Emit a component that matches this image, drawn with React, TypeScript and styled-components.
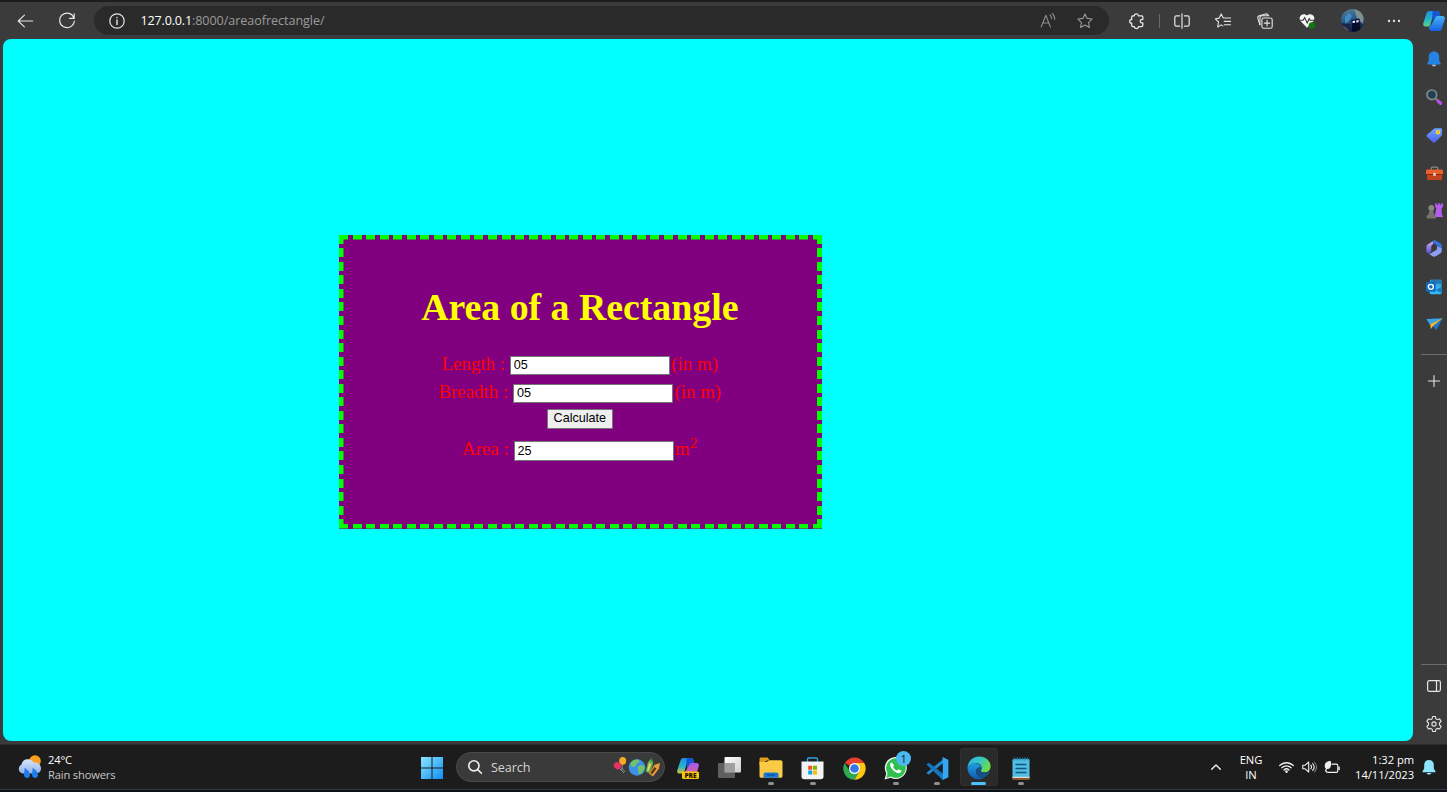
import React from "react";
import styled, { createGlobalStyle, css } from "styled-components";

const GlobalStyle = createGlobalStyle`
  * { box-sizing: border-box; }
  html, body { margin: 0; padding: 0; overflow: hidden; background: #0b0f17; }
`;

const ui = css`
  font-family: "Open Sans", "Noto Sans", sans-serif;
`;

const Screen = styled.div`
  width: 1447px;
  height: 792px;
  display: flex;
  flex-direction: column;
  overflow: hidden;
  background: #0b0f17;
`;

const Browser = styled.div`
  height: 744px;
  display: flex;
  flex-direction: column;
  background: #3b3b3b;
  border-top: 2px solid #1d1d1d;
`;

const Toolbar = styled.header`
  height: 37px;
  flex: none;
  display: flex;
  align-items: center;
  padding-left: 4px;
`;

const Slot = styled.div<{ $w: number }>`
  width: ${(p) => p.$w}px;
  height: 100%;
  flex: none;
  display: flex;
  align-items: center;
  justify-content: center;
`;

const AddressBar = styled.div`
  width: 1015px;
  height: 29px;
  margin: 0 12px 0 6px;
  display: flex;
  align-items: center;
  flex: none;
  border-radius: 15px;
  background: #2a2a2a;
`;

const Url = styled.span`
  ${ui}
  flex: 1;
  font-size: 12.6px;
  line-height: 18px;
  letter-spacing: -0.06px;
  color: #9b9b9b;
  white-space: pre;
`;

const Host = styled.span`
  color: #fff;
  letter-spacing: -0.2px;
`;

const BarDivider = styled.i`
  width: 1px;
  height: 14px;
  background: #6a6a6a;
`;

const Content = styled.div`
  flex: 1;
  display: flex;
  min-height: 0;
`;

const Page = styled.main`
  width: 1410px;
  height: 702px;
  margin-left: 3px;
  flex: none;
  border-radius: 8px;
  background: #00ffff;
  padding: 196.3px 0 0 336px;
  font-family: "Liberation Serif", "Times New Roman", serif;
`;

const Card = styled.form`
  width: 483px;
  height: 293.4px;
  padding: 49.4px 1.4px 0 0;
  display: flex;
  flex-direction: column;
  align-items: center;
  color: #ff0000;
  font-size: 18.9px;
  background-color: #800080;
  background-image:
    repeating-linear-gradient(90deg, #0f0 0 9px, transparent 9px 13.543px),
    repeating-linear-gradient(90deg, #0f0 0 9px, transparent 9px 13.543px),
    repeating-linear-gradient(180deg, #0f0 0 9px, transparent 9px 13.548px),
    repeating-linear-gradient(180deg, #0f0 0 9px, transparent 9px 13.548px);
  background-size: 100% 4.5px, 100% 4.5px, 4.5px 100%, 5px 100%;
  background-position: top, bottom, left, right;
  background-repeat: no-repeat;
`;

const Title = styled.h1`
  margin: 0;
  height: 44px;
  line-height: 44px;
  font-size: 37.8px;
  font-weight: bold;
  color: #ffff00;
  white-space: nowrap;
`;

const Row = styled.div<{ $gap: number }>`
  height: 20px;
  margin-top: ${(p) => p.$gap}px;
  display: flex;
  align-items: flex-start;
  white-space: pre;
  line-height: 20px;
`;

const Label = styled.label`
  margin-top: -2px;
  white-space: pre;
`;

const Field = styled.input`
  width: 160.5px;
  height: 19.5px;
  margin: 0 1px 0 0;
  padding: 0 3px;
  border: 1px solid #767676;
  border-radius: 0;
  outline: none;
  background: #fff;
  color: #000;
  font: 12.6px "Liberation Sans", Arial, sans-serif;
`;

const Sup = styled.sup`
  font-size: 15.6px;
  line-height: 0;
  vertical-align: super;
`;

const Submit = styled.button`
  width: 66px;
  height: 20.5px;
  margin: 5px 0 0;
  padding: 0 0 1px;
  border: 1px solid #767676;
  border-radius: 1px;
  background: #efefef;
  color: #000;
  font: 12.6px "Liberation Sans", Arial, sans-serif;
`;

const Sidebar = styled.aside`
  width: 34px;
  padding: 1.5px 0 2px 8px;
  display: flex;
  flex-direction: column;
`;

const SideItem = styled.div<{ $h?: number }>`
  height: ${(p) => p.$h ?? 37.9}px;
  flex: none;
  display: flex;
  align-items: center;
  justify-content: center;
`;

const SideRule = styled.hr<{ $top?: string }>`
  width: 100%;
  height: 1px;
  flex: none;
  margin: ${(p) => p.$top ?? "0"} 0 0;
  border: 0;
  background: #6c6c6c;
`;

const Taskbar = styled.footer`
  height: 46px;
  flex: none;
  display: flex;
  align-items: center;
  background: #1c1c1c;
  border-top: 1px solid #2c2c2c;
  border-bottom: 1px solid #343a42;
  color: #fff;
`;

const Weather = styled.div`
  ${ui}
  width: 411px;
  padding-left: 18px;
  display: flex;
  align-items: center;
  gap: 6px;
  font-size: 11.2px;
  line-height: 15px;
  letter-spacing: -0.18px;
  flex: none;
`;

const Muted = styled.div`
  color: #c6c6c6;
  white-space: nowrap;
`;

const StartButton = styled.div`
  width: 42px;
  flex: none;
  display: flex;
  justify-content: center;
  padding-top: 1px;
`;

const SearchBox = styled.div`
  ${ui}
  width: 209px;
  height: 30px;
  flex: none;
  margin: 0 2px 0 3px;
  padding: 0 4px 0 11px;
  display: flex;
  align-items: center;
  border-radius: 15px;
  border: 1px solid #4b4b4b;
  background: #3a3a3a;
  color: #d4d4d4;
  font-size: 12.6px;
  letter-spacing: -0.1px;
`;

const SearchText = styled.span`
  flex: 1;
  padding: 1px 0 0 9px;
`;

const TaskButton = styled.div<{ $active?: boolean }>`
  width: 37.6px;
  height: 38px;
  margin: 0 2px;
  flex: none;
  display: flex;
  flex-direction: column;
  align-items: center;
  padding-top: 8px;
  border-radius: 4px;
  background: ${(p) => (p.$active ? "#2a2a2a" : "transparent")};
  box-shadow: ${(p) => (p.$active ? "inset 0 0 0 1px #303030" : "none")};
`;

const Indicator = styled.i<{ $active?: boolean }>`
  width: ${(p) => (p.$active ? 15 : 6)}px;
  height: 3px;
  margin-top: 2px;
  border-radius: 2px;
  background: ${(p) => (p.$active ? "#4cc2ff" : "#8f8f8f")};
`;

const IconBox = styled.div`
  position: relative;
  height: 24px;
  display: flex;
  align-items: center;
`;

const Badge = styled.span`
  ${ui}
  position: absolute;
  right: -4px;
  top: -5px;
  width: 15px;
  height: 15px;
  border-radius: 50%;
  background: #4cb8f0;
  color: #10202c;
  font-size: 11px;
  line-height: 15px;
  text-align: center;
`;

const Tray = styled.div`
  ${ui}
  flex: 1;
  height: 100%;
  display: flex;
  align-items: center;
  justify-content: flex-end;
  padding-right: 4px;
  font-size: 11.2px;
  line-height: 15px;
`;

const Language = styled.div`
  width: 40px;
  margin-left: 10px;
  text-align: center;
  letter-spacing: -0.1px;
`;

const Clock = styled.div`
  width: 67px;
  text-align: right;
  white-space: nowrap;
  letter-spacing: -0.05px;
`;

const Glyph = styled.svg`
  display: block;
  flex: none;
  overflow: visible;
`;

const LineGlyph = styled(Glyph)<{ $c?: string; $sw?: number }>`
  fill: none;
  stroke: ${(p) => p.$c ?? "#e6e6e6"};
  stroke-width: ${(p) => p.$sw ?? 1.1};
  stroke-linecap: round;
  stroke-linejoin: round;
`;

/* ---------- toolbar icons ---------- */

const BackIcon = () => (
  <LineGlyph width="16" height="16" viewBox="0 0 16 16">
    <path d="M15.7 8H1.2M7.400 2.200L1.200 8l6.200 5.800" />
  </LineGlyph>
);

const ReloadIcon = () => (
  <LineGlyph width="16" height="16" viewBox="0 0 16 16" $sw={1.2}>
    <path d="M15 5.2A7.3 7.3 0 1 0 15.3 8M15.2 .8v4.6h-4.6" />
  </LineGlyph>
);

const InfoIcon = () => (
  <LineGlyph width="16" height="16" viewBox="0 0 16 16" $sw={1.2}>
    <circle cx="8" cy="8" r="7.2" />
    <path d="M8 7v4.500M8 4.400v.3" strokeWidth="1.400" />
  </LineGlyph>
);

const ReadAloudIcon = () => (
  <LineGlyph width="16" height="16" viewBox="0 0 16 16" $c="#8d8d8d">
    <path d="M1.2 14L5.8 2.3 10.4 14M2.8 10h6M10 1.800c1.200 1 1.600 2.300 1.500 3.800M12.300.6c1.800 1.500 2.600 3.400 2.400 5.800" />
  </LineGlyph>
);

const STAR = "M8 .9l2.15 4.5 4.95.68-3.6 3.45.88 4.92L8 12.1l-4.38 2.35.88-4.92L.9 6.08l4.95-.68z";

const StarIcon = () => (
  <LineGlyph width="16" height="16" viewBox="0 0 16 16" $c="#989898">
    <path d={STAR} />
  </LineGlyph>
);

const PuzzleIcon = () => (
  <LineGlyph width="16" height="16" viewBox="0 0 16 16" $sw={1.3}>
    <path d="M5.200 2.900c-.2-2.700 4.500-2.700 4.100 0h3.400c.6 0 1.100.5 1.100 1.100v2.500c-3.300-.6-3.500 3.700 0 3.500v2.600c0 .6-.5 1.100-1.100 1.100H9.400c.6 2.400-4.400 2.500-4 0H3.800c-.6 0-1.100-.5-1.100-1.100v-2.400c-2.700.4-2.700-4 0-3.700V4c0-.6.500-1.100 1.100-1.100z" />
  </LineGlyph>
);

const SplitIcon = () => (
  <LineGlyph width="16" height="16" viewBox="0 0 16 16" $sw={1.2}>
    <path d="M8 .8v14.4M5.600 2.800H2.500C1.400 2.800.8 3.400.8 4.500v7c0 1.100.6 1.700 1.700 1.700h3.100M10.400 2.800h3.100c1.100 0 1.700.6 1.700 1.700v7c0 1.100-.6 1.700-1.700 1.700h-3.100" />
  </LineGlyph>
);

const FavoritesIcon = () => (
  <LineGlyph width="16" height="16" viewBox="0 0 16 16">
    <path d="M15.600 5H8.300L6.200.9 4.200 5.100.4 5.800l3.100 3.200-.8 5 3.500-2.100 1.600 1M9.300 8.400h6.300M9.300 11.700h6.300" />
  </LineGlyph>
);

const CollectionsIcon = () => (
  <LineGlyph width="16" height="16" viewBox="0 0 16 16">
    <rect x="4.900" y="5" width="10.300" height="10.200" rx="1.800" />
    <path d="M10.050 7.400v5.500M7.300 10.100h5.500" />
    <path d="M2.900 11.800L.9 5.300C.5 4 1 3.200 2.200 2.800L8.600 1c1.300-.3 2.200.1 2.600 1.500" />
    <path d="M2.900 11.800V4.900c0-1.300.7-2.100 2-2.100h6.900" />
  </LineGlyph>
);

const HealthIcon = () => (
  <Glyph width="17" height="16" viewBox="0 0 17 16">
    <path d="M8 14.800L1.400 8C-1.500 3.200 4.400-1.200 8 2.600c3.600-3.800 9.500.6 6.600 5.400z" fill="#f4f4f4" />
    <path d="M.8 7.300h3.300L5.700 4.600l2.500 5.400 2-4.300 1 1.600h3.900" fill="none" stroke="#333" strokeWidth="1.100" />
    <circle cx="12.900" cy="12.400" r="3.200" fill="#0e7a0d" />
    <path d="M11.600 12.500l1 1 1.700-2" fill="none" stroke="#063" strokeWidth=".8" />
  </Glyph>
);

const AvatarIcon = () => (
  <Glyph width="23" height="23" viewBox="0 0 23 23">
    <defs>
      <linearGradient id="av" x1="0" y1="0" x2="0.300" y2="1">
        <stop offset="0" stopColor="#5d7f90" />
        <stop offset=".5" stopColor="#2a5f8c" />
        <stop offset="1" stopColor="#0f1d45" />
      </linearGradient>
      <clipPath id="avc"><circle cx="11.500" cy="11.500" r="11.500" /></clipPath>
    </defs>
    <g clipPath="url(#avc)">
      <rect width="23" height="23" fill="url(#av)" />
      <path d="M13 0l6 2 4 6-1 7-6-6z" fill="#7f8f93" />
      <path d="M4 8l4-4 3 3-3 5-4 3z" fill="#3f8bc4" />
      <path d="M0 14l9 1 2 8H0z" fill="#16284a" />
      <path d="M10.500 11l8-1.500.7 13h-8z" fill="#070b28" />
      <path d="M11.500 12l2.500-.4v2.200l-2.500.3zM15.200 11.500l2.400-.4v2.200l-2.400.3z" fill="#dbe8ff" />
      <path d="M1 16l5 3 3 4-6-1z" fill="#5b4a52" />
    </g>
  </Glyph>
);

const DotsIcon = () => (
  <Glyph width="14" height="4" viewBox="0 0 14 4" fill="#e8e8e8">
    <circle cx="2" cy="2" r="1.150" />
    <circle cx="7" cy="2" r="1.150" />
    <circle cx="12" cy="2" r="1.150" />
  </Glyph>
);

const CopilotIcon = ({ pre }: { pre?: boolean }) => {
  const id = pre ? "p" : "c";
  return (
    <Glyph width="22" height="22" viewBox="0 0 22 22">
      <defs>
        <linearGradient id={id + "1"} x1="0" y1="0" x2="0" y2="1">
          <stop offset="0" stopColor="#1f8fe8" />
          <stop offset=".55" stopColor="#27b4c9" />
          <stop offset="1" stopColor={pre ? "#d9c531" : "#5bd18b"} />
        </linearGradient>
        <linearGradient id={id + "2"} x1="0" y1="0" x2="0" y2="1">
          <stop offset="0" stopColor={pre ? "#a35af0" : "#48b4f5"} />
          <stop offset="1" stopColor={pre ? "#f2628a" : "#1463e8"} />
        </linearGradient>
      </defs>
      <path d="M6.500 1h7.500c1.300 0 2 .7 2.300 1.900L17.200 6h-2.700c-1.300 0-2 .8-2.400 2L10 5.500 7.300 14.800c-.4 1.200-1 1.700-2.200 1.700H2.700C.6 16.500-.2 15 .3 13.200L3.500 3.500C4.100 1.700 5 1 6.500 1z" fill={`url(#${id}1)`} />
      <path d="M9.500 1h4.500c1.300 0 2 .7 2.300 1.900L17.200 6h-2.700c-1.300 0-2 .8-2.400 2L10.600 13 9.300 8z" fill="#1556d3" />
      <path d="M14.600 6h4.900c1.900 0 2.800 1.400 2.300 3.100l-3 9.300c-.6 1.800-1.300 2.600-2.900 2.600H8.500c-1.300 0-2-.8-2.200-1.900l-.6-2.600c1.800-.1 2.500-.9 3-2.500L12.200 8c.4-1.300 1.100-2 2.400-2z" fill={`url(#${id}2)`} />
      {pre && (
        <>
          <rect x="5" y="14.500" width="17" height="7.500" rx="1.500" fill="#fdc60a" />
          <text x="13.500" y="20.700" textAnchor="middle" fontFamily="Open Sans, sans-serif" fontWeight="800" fontSize="6.600" fill="#1b1500">PRE</text>
        </>
      )}
    </Glyph>
  );
};

/* ---------- sidebar icons ---------- */

const BellIcon = () => (
  <Glyph width="16" height="16" viewBox="0 0 16 16">
    <path d="M5.600 13.500h4.800c-.6 2.600-4.200 2.600-4.800 0z" fill="#b9bcc2" />
    <path d="M8 .5c3.400 0 5.200 2.400 5.200 5.300v3.600l1.500 3c.3.7 0 1.100-.6 1.100H1.900c-.6 0-.9-.4-.6-1.100l1.500-3V5.800C2.800 2.900 4.600.5 8 .5z" fill="#2583e4" />
  </Glyph>
);

const LensIcon = () => (
  <Glyph width="17" height="17" viewBox="0 0 17 17">
    <path d="M9.500 9.500l3 3" stroke="#9a9a9a" strokeWidth="1.500" />
    <path d="M12.200 12.200l2.300 2.100" stroke="#c04af0" strokeWidth="3.200" strokeLinecap="round" />
    <circle cx="5.800" cy="5.800" r="4.800" fill="#23414d" stroke="#7b8a92" strokeWidth="1.700" />
  </Glyph>
);

const TagIcon = () => (
  <Glyph width="17" height="17" viewBox="0 0 17 17">
    <defs>
      <linearGradient id="tag" x1="0" y1="0" x2="0" y2="1">
        <stop offset="0" stopColor="#6fa8ff" />
        <stop offset="1" stopColor="#4a60e8" />
      </linearGradient>
    </defs>
    <path d="M9.500 1.200h5c1 0 1.600.6 1.600 1.600v4.700c0 .7-.2 1.100-.7 1.600l-6.300 6.100c-.8.7-1.600.7-2.300 0L1.200 9.900c-.8-.8-.7-1.600 0-2.300l6.500-5.700c.5-.5 1-.7 1.800-.7z" fill="url(#tag)" />
    <circle cx="12" cy="5.300" r="2.200" fill="#ffd92e" />
    <circle cx="12" cy="5.300" r=".7" fill="#a48a1a" />
  </Glyph>
);

const ToolboxIcon = () => (
  <Glyph width="17" height="15" viewBox="0 0 17 15">
    <path d="M5.300 4V2.300c0-.7.400-1.100 1.100-1.100h4.200c.7 0 1.100.4 1.100 1.100V4" fill="none" stroke="#8b8b8b" strokeWidth="1.300" />
    <rect x="1" y="7" width="15" height="7" rx="1" fill="#c4421c" />
    <rect x="0" y="3.600" width="17" height="5" rx="1.200" fill="#e8602c" />
    <rect x="0" y="8" width="17" height="1" fill="#8c2a10" />
    <rect x="7.200" y="6.700" width="2.600" height="3.200" rx="1" fill="#e6d5c8" />
  </Glyph>
);

const ChessIcon = () => (
  <Glyph width="17" height="16" viewBox="0 0 17 16">
    <path d="M9.200.3h1.700v1.500h1.300V.3h1.700v1.500h1.300V.3H17v3.500l-1.500 1.400.5 7.200h1v1.600H9.300l-.5-1.500 1.600-7.300-1.200-1.400z" fill="#b65cf0" />
    <circle cx="5.300" cy="5" r="2.900" fill="#8a8783" />
    <path d="M3.300 7.400h4c0 2.500.5 3.800 1.700 5.100h1v3H.6v-3h1c1.200-1.300 1.700-2.600 1.700-5.100z" fill="#77736f" />
  </Glyph>
);

const M365Icon = () => (
  <Glyph width="16" height="17" viewBox="0 0 16 17">
    <defs>
      <linearGradient id="m3" x1="0" y1="0" x2="0" y2="1">
        <stop offset="0" stopColor="#d7b3f5" />
        <stop offset="1" stopColor="#5a4fd0" />
      </linearGradient>
    </defs>
    <path d="M8.500.3L2.600 3.700C1 4.700.4 5.700.4 7.300v4.200c0 1.500 1.200 2.200 2.500 1.500l2.300-1.300V7.500c0-1.600.6-2.600 2-3.400z" fill="url(#m3)" />
    <path d="M7 .8C8.200.1 9.300.2 10.500.9L14 3c1.300.8 1.800 1.600 1.800 3.100v4.500L11 8V6.800c0-1.300-.4-2-1.500-2.600L6 2z" fill="#3d6fd8" />
    <path d="M15.700 8.200v2.300c0 1.500-.6 2.500-1.900 3.300l-3.600 2.200c-1.500.9-2.600.9-4 0l-3.500-2.300c1 0 1.800-.4 2.600-.8L11 9.400V6.500z" fill="#8d9df0" />
  </Glyph>
);

const OutlookIcon = () => (
  <Glyph width="16" height="16" viewBox="0 0 16 16">
    <rect x="4" y=".8" width="11.500" height="9" rx="1" fill="#35a9e8" />
    <path d="M5 .8h10.500v4H5z" fill="#2577b4" />
    <path d="M3.500 8.500l12.300-.8v6.100c0 .8-.6 1.400-1.400 1.400H4.900c-.8 0-1.400-.6-1.400-1.400z" fill="#35b8f1" />
    <path d="M15.800 7.700v6.500L9.500 11z" fill="#147bc4" />
    <rect x="0" y="3" width="9.700" height="9.700" rx="1" fill="#0f6cbd" />
    <circle cx="4.850" cy="7.850" r="2.500" fill="none" stroke="#fff" strokeWidth="1.400" />
  </Glyph>
);

const DropIcon = () => (
  <Glyph width="17" height="13" viewBox="0 0 17 13">
    <path d="M.3 1L16.700.3 4.200 7.200z" fill="#39a5e6" />
    <path d="M16.700.3L10.500 12 6.800 8.300z" fill="#1878d0" />
    <path d="M16.700.3L4.200 6.200l.7 4.900 2-2.800z" fill="#f6b830" />
  </Glyph>
);

const PlusIcon = () => (
  <LineGlyph width="12" height="12" viewBox="0 0 12 12"><path d="M6 .5v11M.5 6h11" /></LineGlyph>
);

const PanelIcon = () => (
  <LineGlyph width="14" height="12" viewBox="0 0 14 12" $sw={1.200}>
    <rect x=".6" y=".6" width="12.800" height="10.800" rx="1.800" />
    <path d="M9.500.8v10.400" />
  </LineGlyph>
);

const GearIcon = () => (
  <LineGlyph width="16" height="16" viewBox="0 0 16 16">
    <path d="M6.600.5h2.800l.5 2.200 1.500.9 2.200-.7 1.500 2.500L13.500 7v1.900l1.600 1.600-1.500 2.500-2.200-.6-1.500.9-.5 2.200H6.600l-.5-2.200-1.500-.9-2.200.6-1.500-2.500 1.600-1.600V7L.9 5.400l1.500-2.500 2.200.7 1.500-.9z" />
    <circle cx="8" cy="8" r="2.100" />
  </LineGlyph>
);

/* ---------- taskbar icons ---------- */

const WeatherIcon = () => (
  <Glyph width="24" height="24" viewBox="0 0 24 24">
    <defs>
      <linearGradient id="cl" x1="0" y1="0" x2="0" y2="1">
        <stop offset="0" stopColor="#d9e6fb" />
        <stop offset="1" stopColor="#8fb1e8" />
      </linearGradient>
    </defs>
    <circle cx="17" cy="6" r="5.800" fill="#f8a01f" />
    <path d="M4.500 18.500A4.800 4.800 0 0 1 3.500 9.500 6.500 6.500 0 0 1 15.500 7.500c4.500-.5 7.500 2.300 7.500 5.800 0 3.400-2.200 5.200-5.500 5.200z" fill="url(#cl)" />
    <path d="M6.500 13c3 1.500 5.500 4.300 5.500 7.300 0 3.500-6 3.500-6-.3 0-2.500 1-4.500.5-7zM14.500 13c3 1.500 5.500 4.300 5.500 7.300 0 3.500-6 3.500-6-.3 0-2.500 1-4.500.5-7z" fill="#1d7bea" />
  </Glyph>
);

const WindowsIcon = () => (
  <Glyph width="22" height="22" viewBox="0 0 22 22">
    <defs>
      <linearGradient id="win" x1="0" y1="0" x2="22" y2="22" gradientUnits="userSpaceOnUse">
        <stop offset="0" stopColor="#8be6ff" />
        <stop offset="1" stopColor="#0f8df2" />
      </linearGradient>
    </defs>
    <path d="M0 0h10.500v10.500H0zM11.500 0H22v10.500H11.500zM0 11.500h10.500V22H0zM11.500 11.500H22V22H11.500z" fill="url(#win)" />
  </Glyph>
);

const SearchIcon = () => (
  <LineGlyph width="14" height="14" viewBox="0 0 14 14" $sw={1.600} $c="#f0f0f0">
    <circle cx="5.900" cy="5.800" r="5.100" />
    <path d="M9.700 9.600l3.700 3.700" />
  </LineGlyph>
);

const HighlightArt = () => (
  <Glyph width="47" height="22" viewBox="0 0 47 22">
    <path d="M9.500 8l-1 7M6 12l5 5M9 12l3 4" stroke="#8b8b92" fill="none" />
    <ellipse cx="9.700" cy="4.800" rx="3.500" ry="3.900" fill="#f7a928" />
    <ellipse cx="4.600" cy="9.700" rx="3.800" ry="3.500" fill="#e8305f" transform="rotate(30 4.600 9.700)" />
    <circle cx="24" cy="11.500" r="8.300" fill="#3e8fe6" />
    <path d="M17.500 7c2-3 5-4 8-3.500l1 2.500-3 1.500-1 3-4 .5zM25 10l5-1 2 3-3 5-3 1-1-4z" fill="#6fc46a" />
    <path d="M34.800 6.500L38.700 1.500l1.500 6-3.400 9.700-4.200-1.500z" fill="#5fae4d" />
    <path d="M36 7l2.400.8-2.700 7.500-1.600-.6z" fill="#e8d26c" />
    <path d="M37.200 4l2.200.7-.7-3.200z" fill="#2a6a2c" />
    <path d="M41.500 8.800L47 7l-1 5.600-6 8-4-3z" fill="#e99a3c" />
    <path d="M41.500 11l2 1.500-4.300 5.800-1.800-1.400z" fill="#5b3414" />
  </Glyph>
);

const TaskViewIcon = () => (
  <Glyph width="23" height="22" viewBox="0 0 23 22">
    <defs>
      <linearGradient id="tv" x1="0" y1="0" x2="1" y2="1">
        <stop offset="0" stopColor="#fff" />
        <stop offset="1" stopColor="#cfcfcf" />
      </linearGradient>
    </defs>
    <rect x="6.500" y="0" width="16.500" height="15.500" rx="1" fill="url(#tv)" />
    <rect x="0" y="6" width="17" height="15" rx="1" fill="#6b6b6b" opacity=".85" />
    <rect x="6.500" y="6" width="10.500" height="9.500" fill="#a0a0a0" />
  </Glyph>
);

const FolderIcon = () => (
  <Glyph width="24" height="22" viewBox="0 0 24 22">
    <path d="M.5 2c0-.9.600-1.500 1.500-1.500h6.500l2.300 2.700H8.500L.5 8z" fill="#e39c1c" />
    <path d="M.5 5h7l2.500-1.800h11.700c1 0 1.800.8 1.800 1.800v14c0 1-.8 1.800-1.800 1.800H2.300c-1 0-1.800-.8-1.800-1.800z" fill="#fccb45" />
    <path d="M4.500 20.800v-3.200c0-1.200.8-2 2-2h11c1.200 0 2 .8 2 2v3.200z" fill="#1a77d2" />
    <path d="M8 18h8" stroke="#0c4f9e" strokeWidth="1.300" />
  </Glyph>
);

const StoreIcon = () => (
  <Glyph width="23" height="23" viewBox="0 0 23 23">
    <path d="M6.500 5V2.200c0-.7.500-1.200 1.200-1.200h7.600c.7 0 1.200.5 1.200 1.200V5" fill="none" stroke="#2f9fd8" strokeWidth="1.400" />
    <path d="M.5 4.500h22v15c0 1.700-1 2.700-2.700 2.700H3.200C1.500 22.200.5 21.200.5 19.500z" fill="#f1f3f5" />
    <path d="M7.200 8.700h4v4h-4z" fill="#f25022" />
    <path d="M12 8.700h4v4h-4z" fill="#7fba00" />
    <path d="M7.200 13.500h4v4h-4z" fill="#00a4ef" />
    <path d="M12 13.500h4v4h-4z" fill="#ffb900" />
  </Glyph>
);

const ChromeIcon = () => (
  <Glyph width="23" height="23" viewBox="0 0 48 48">
    <path d="M24 24L4 12.500A23.500 23.500 0 0 1 44.400 12.500H24z" fill="#e8402f" />
    <path d="M24 24l10 5.700L24 47.500A23.500 23.500 0 0 1 3.600 12.300L14 29.700z" fill="#2da94f" />
    <path d="M24 12.500h20.400A23.500 23.500 0 0 1 24 47.500l10-17.800z" fill="#fdc60f" />
    <circle cx="24" cy="24" r="11.600" fill="#fff" />
    <circle cx="24" cy="24" r="9" fill="#3578e5" />
  </Glyph>
);

const WhatsAppIcon = () => (
  <Glyph width="23" height="23" viewBox="0 0 23 23">
    <path d="M.5 22.500l1.800-6A11 11 0 1 1 6.700 20.700z" fill="#f4f9f4" />
    <path d="M2.300 20.900l1.300-4.600a9.800 9.800 0 1 1 3.400 3.300z" fill="#2fc04f" />
    <path d="M8.500 6.200c-.5-1.100-1.700-.6-2.200.3-1.700 3.300 5.300 10.600 9.300 9.600 1.400-.4 2.300-1.900 1.600-2.500l-2.300-1.200c-.8-.3-1.100 1.400-1.900 1.200-1.600-.5-3.200-2-3.900-3.500-.2-.6 1-1.100.8-1.900z" fill="#fff" />
  </Glyph>
);

const VSCodeIcon = () => (
  <Glyph width="23" height="23" viewBox="0 0 24 24">
    <path d="M17.500.3L23.200 3v18l-5.700 2.700-9.800-9.300L3 18.200l-2.200-1.100v-1L17 3z" fill="#1f8ad2" />
    <path d="M.8 7.200L3 5.900 17.500 17v6.700L.8 8.400z" fill="#1674bd" />
    <path d="M17.500.3L23.200 3v18l-5.700 2.700z" fill="#35a8f0" />
    <path d="M17.500 6.800v10.400L10.800 12z" fill="#1c1c1c" />
  </Glyph>
);

const EdgeIcon = () => (
  <Glyph width="24" height="24" viewBox="0 0 24 24">
    <defs>
      <linearGradient id="e1" x1="0" y1="0" x2="1" y2=".4">
        <stop offset="0" stopColor="#2fb4ef" />
        <stop offset=".6" stopColor="#36c7c0" />
        <stop offset="1" stopColor="#6bdc4a" />
      </linearGradient>
      <linearGradient id="e2" x1="0" y1="0" x2="0" y2="1">
        <stop offset="0" stopColor="#1e9de0" />
        <stop offset="1" stopColor="#1259b0" />
      </linearGradient>
    </defs>
    <path d="M.5 11C1.500 4.500 6.300.4 12.200.4c6.700 0 11.400 4.700 11.400 9.900 0 3.800-2.700 6.200-6.200 6.200-2.800 0-4.200-1-3.400-2.400 2.200-3.300-.6-6.900-5-6.900C5 7.200 2 8.800.5 11z" fill="url(#e1)" />
    <path d="M.4 12c.3-2.700 3.700-4.900 7.800-4.700 3.900.2 6.300 2.600 6.200 4.800-1.400-1.500-4.900-.6-5.300 2.900-.4 4 3.600 7.500 8.700 6.300-5.500 4.400-16.400 2-17.400-9.300z" fill="url(#e2)" />
    <path d="M9.100 15c.2-2 1.600-3.500 3.500-3.700 1 .3 1.700.8 1.700 1.300-1.300 2.400.1 4 3.500 4 1.700 0 3.200-.5 4.200-1.200.8-.4 1.200.1.8.8-1 2-2.700 3.900-5 5.100-5.100 1.200-9.100-2.300-8.700-6.300z" fill="#174f86" />
  </Glyph>
);

const NotepadIcon = () => (
  <Glyph width="18" height="23" viewBox="0 0 18 23">
    <rect x=".5" y="2" width="17" height="20.500" rx="1.200" fill="#52bde2" />
    <path d="M.5 20.500h17v1c0 .8-.4 1.300-1.200 1.300H1.700c-.8 0-1.200-.5-1.200-1.300z" fill="#9a4f22" />
    <path d="M.5 19.800h17v1H.5z" fill="#f1f1f1" />
    <path d="M2.500.5v3M5.100.5v3M7.700.5v3M10.300.5v3M12.900.5v3M15.500.5v3" stroke="#2586b8" strokeWidth="1.200" />
    <path d="M3.500 7.500h11M3.500 11.500h11M3.500 15.500h11" stroke="#12567f" strokeWidth="1.300" />
  </Glyph>
);

const ChevronIcon = () => (
  <LineGlyph width="10" height="6" viewBox="0 0 10 6" $sw={1.400} $c="#f2f2f2"><path d="M.7 5.200L5 .9l4.300 4.300" /></LineGlyph>
);

const WifiIcon = () => (
  <LineGlyph width="15" height="12" viewBox="0 0 15 12" $sw={1.300} $c="#f0f0f0">
    <path d="M.7 4.500a9.800 9.800 0 0 1 13.600 0M2.900 6.800a6.700 6.700 0 0 1 9.200 0M5 9a3.600 3.600 0 0 1 5 0" />
    <circle cx="7.500" cy="10.600" r=".7" fill="#f0f0f0" />
  </LineGlyph>
);

const VolumeIcon = () => (
  <LineGlyph width="15" height="12" viewBox="0 0 15 12" $c="#f0f0f0">
    <path d="M.8 4.200h2.400L6.700 1v10L3.200 7.800H.8zM8.800 4.200c.9 1.100.9 2.500 0 3.600M10.600 2.500c1.900 2.100 1.900 4.900 0 7" />
    <path d="M12.300 1c2.700 3 2.700 7 0 10" stroke="#777" />
  </LineGlyph>
);

const BatteryIcon = () => (
  <LineGlyph width="16" height="13" viewBox="0 0 16 13" $c="#f0f0f0" $sw={1.200}>
    <path d="M8 3.200h4.200c1 0 1.600.6 1.600 1.600v4.900c0 1-.6 1.600-1.600 1.600H3.800c-.9 0-1.500-.4-1.700-1.200M15.200 6v2.500" />
    <path d="M6.300.6C4 .8 1.200 2.200 1.300 5c0 1.400 1 2.300 2.400 2.300 3 0 3-4.300 2.600-6.700z" fill="#f0f0f0" />
    <path d="M3.700 5.500L1.500 9.800" />
  </LineGlyph>
);

const NoticeIcon = () => (
  <Glyph width="14" height="15" viewBox="0 0 14 15" fill="#8fe4ff">
    <path d="M7 0c3 0 4.800 2.100 4.800 4.900v3.500l1.600 2.800c.3.600 0 1-.6 1H1.200c-.6 0-.9-.4-.6-1l1.600-2.800V4.900C2.200 2.100 4 0 7 0zM4.700 13h4.600c-.5 2-4.100 2-4.600 0z" />
  </Glyph>
);

const sideIcons = [BellIcon, LensIcon, TagIcon, ToolboxIcon, ChessIcon, M365Icon, OutlookIcon, DropIcon];

type Entry = { icon: React.ReactNode; running?: boolean; active?: boolean; badge?: string };

const entries: Entry[] = [
  { icon: <CopilotIcon pre /> },
  { icon: <TaskViewIcon /> },
  { icon: <FolderIcon />, running: true },
  { icon: <StoreIcon />, running: true },
  { icon: <ChromeIcon /> },
  { icon: <WhatsAppIcon />, running: true, badge: "1" },
  { icon: <VSCodeIcon />, running: true },
  { icon: <EdgeIcon />, running: true, active: true },
  { icon: <NotepadIcon />, running: true },
];

export default function App() {
  return (
    <Screen>
      <GlobalStyle />
      <Browser>
        <Toolbar>
          <Slot $w={42}><BackIcon /></Slot>
          <Slot $w={42}><ReloadIcon /></Slot>
          <AddressBar>
            <Slot $w={46.6}><InfoIcon /></Slot>
            <Url><Host>127.0.0.1</Host>:8000/areaofrectangle/</Url>
            <Slot $w={27}><ReadAloudIcon /></Slot>
            <Slot $w={48}><StarIcon /></Slot>
          </AddressBar>
          <Slot $w={31}><PuzzleIcon /></Slot>
          <Slot $w={14}><BarDivider /></Slot>
          <Slot $w={31}><SplitIcon /></Slot>
          <Slot $w={52}><FavoritesIcon /></Slot>
          <Slot $w={32}><CollectionsIcon /></Slot>
          <Slot $w={52}><HealthIcon /></Slot>
          <Slot $w={38}><AvatarIcon /></Slot>
          <Slot $w={46}><DotsIcon /></Slot>
          <Slot $w={34}><CopilotIcon /></Slot>
        </Toolbar>
        <Content>
          <Page>
            <Card onSubmit={(e) => e.preventDefault()}>
              <Title>Area of a Rectangle</Title>
              <Row $gap={27}>
                <Label>Length : </Label>
                <Field defaultValue="05" />
                <Label>(in m)</Label>
              </Row>
              <Row $gap={8}>
                <Label>Breadth : </Label>
                <Field defaultValue="05" />
                <Label>(in m)</Label>
              </Row>
              <Submit>Calculate</Submit>
              <Row $gap={12}>
                <Label>Area : </Label>
                <Field defaultValue="25" />
                <Label>m<Sup>2</Sup></Label>
              </Row>
            </Card>
          </Page>
          <Sidebar>
            {sideIcons.map((Icon, i) => (
              <SideItem key={i}><Icon /></SideItem>
            ))}
            <SideRule $top="10px" />
            <SideItem $h={52}><PlusIcon /></SideItem>
            <SideRule $top="auto" />
            <SideItem $h={41}><PanelIcon /></SideItem>
            <SideItem $h={36}><GearIcon /></SideItem>
          </Sidebar>
        </Content>
      </Browser>
      <Taskbar>
        <Weather>
          <WeatherIcon />
          <div>
            <div>24°C</div>
            <Muted>Rain showers</Muted>
          </div>
        </Weather>
        <StartButton><WindowsIcon /></StartButton>
        <SearchBox>
          <SearchIcon />
          <SearchText>Search</SearchText>
          <HighlightArt />
        </SearchBox>
        {entries.map((e, i) => (
          <TaskButton key={i} $active={e.active}>
            <IconBox>
              {e.icon}
              {e.badge && <Badge>{e.badge}</Badge>}
            </IconBox>
            {e.running && <Indicator $active={e.active} />}
          </TaskButton>
        ))}
        <Tray>
          <ChevronIcon />
          <Language>ENG<br />IN</Language>
          <Slot $w={30}><WifiIcon /></Slot>
          <Slot $w={16}><VolumeIcon /></Slot>
          <Slot $w={30}><BatteryIcon /></Slot>
          <Clock>1:32 pm<br />14/11/2023</Clock>
          <Slot $w={29}><NoticeIcon /></Slot>
        </Tray>
      </Taskbar>
    </Screen>
  );
}
